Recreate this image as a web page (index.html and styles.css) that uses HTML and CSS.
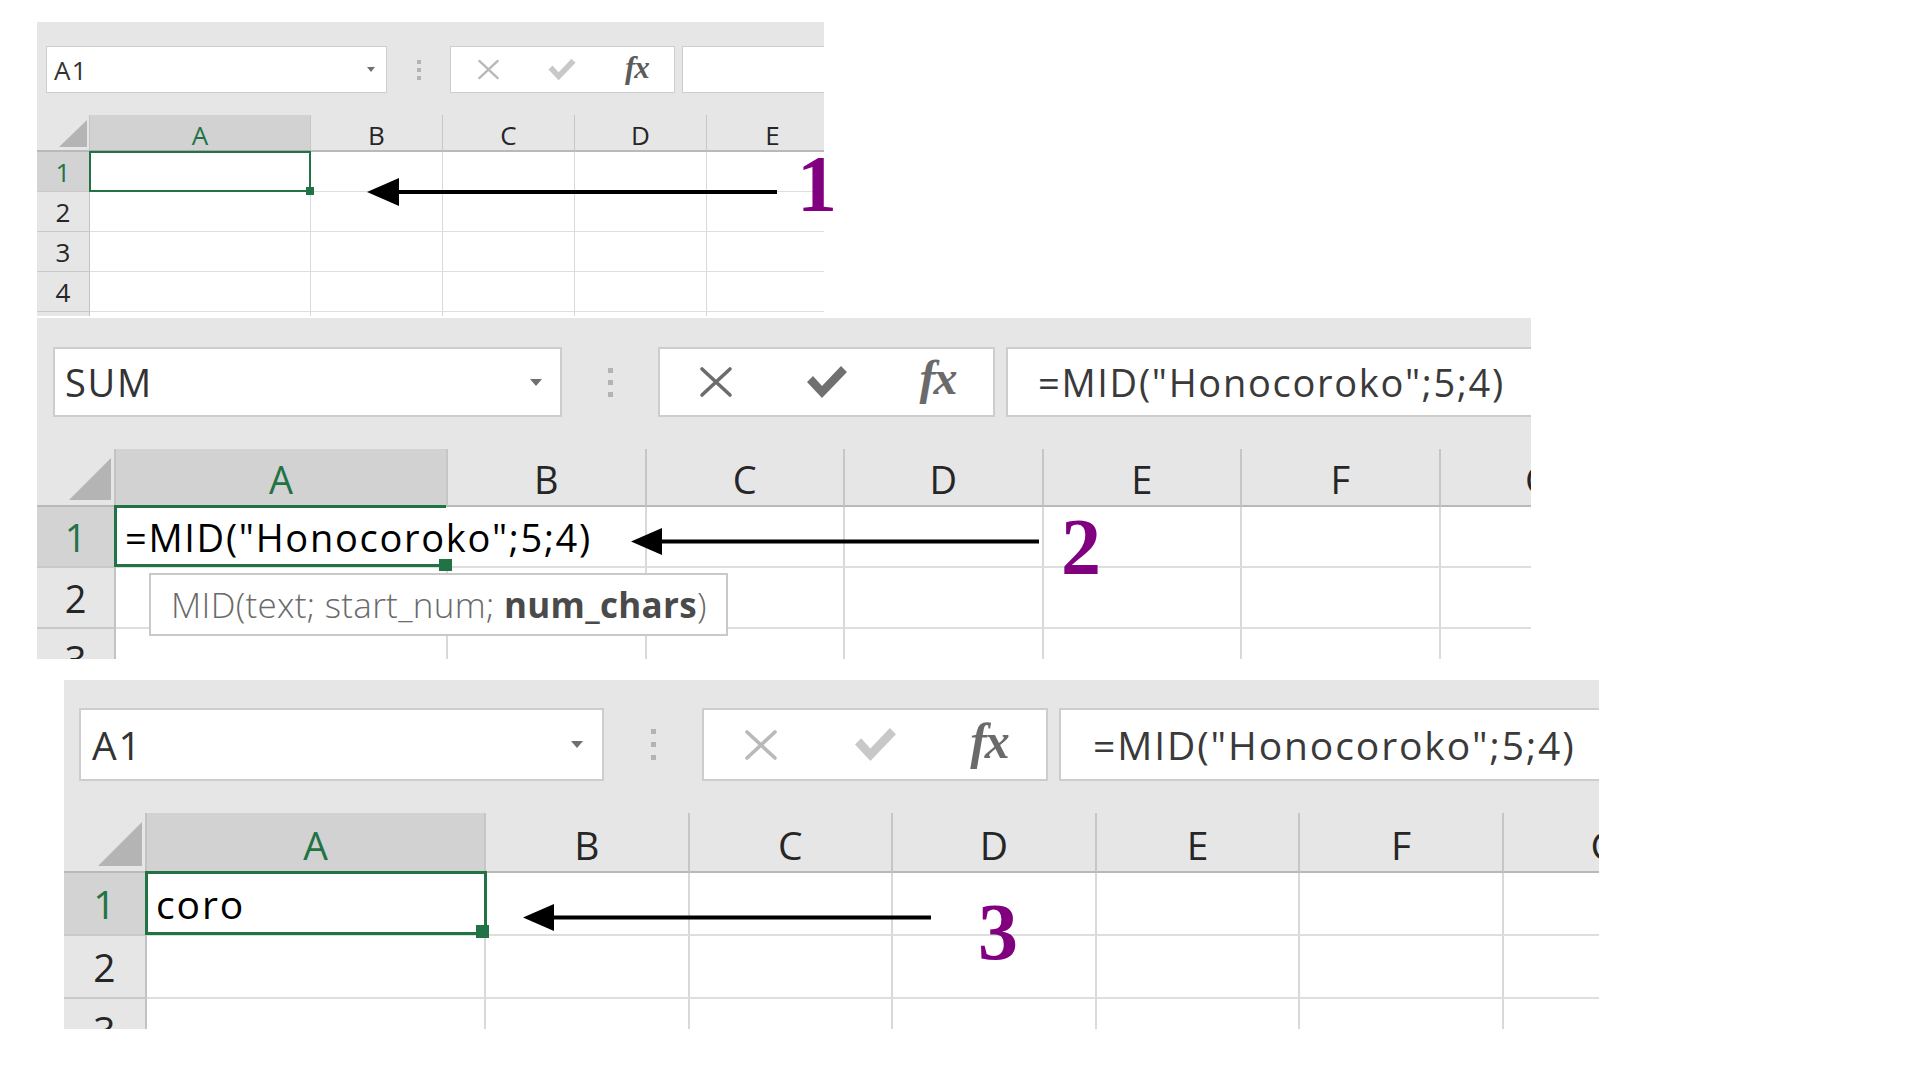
FILE: index.html
```html
<!DOCTYPE html>
<html lang="en">
<head>
<meta charset="utf-8">
<title>MID function steps</title>
<link rel="stylesheet" href="styles.css">
</head>
<body>
<main class="page">

  <section class="panel p1">
    <div class="frame">
      <div class="toolbar">
        <div class="namebox"><span class="name">A1</span><span class="caret"></span></div>
        <div class="vdots"><i></i><i></i><i></i></div>
        <div class="btnbox off">
          <span class="btn"><svg class="ico ico-x" viewBox="0 0 34 32"><path d="M3 3 L31 29 M31 3 L3 29"/></svg></span>
          <span class="btn"><svg class="ico ico-ok" viewBox="0 0 40 34"><polygon points="0,17 6,11 15,21 34,1 40,7 15,33"/></svg></span>
          <span class="btn"><span class="fx">fx</span></span>
        </div>
        <div class="formula"></div>
      </div>
      <div class="sheet">
        <div class="corner"><svg viewBox="0 0 10 10" preserveAspectRatio="none"><polygon points="10,0 10,10 0,10"/></svg></div>
        <div class="ch on">A</div><div class="ch">B</div><div class="ch">C</div><div class="ch">D</div><div class="ch">E</div><div class="ch">F</div>
        <div class="rh on">1</div><div class="c a1 sel"></div><div class="c"></div><div class="c"></div><div class="c"></div><div class="c"></div><div class="c"></div>
        <div class="rh">2</div><div class="c"></div><div class="c"></div><div class="c"></div><div class="c"></div><div class="c"></div><div class="c"></div>
        <div class="rh">3</div><div class="c"></div><div class="c"></div><div class="c"></div><div class="c"></div><div class="c"></div><div class="c"></div>
        <div class="rh">4</div><div class="c"></div><div class="c"></div><div class="c"></div><div class="c"></div><div class="c"></div><div class="c"></div>
        <div class="rh">5</div><div class="c"></div><div class="c"></div><div class="c"></div><div class="c"></div><div class="c"></div><div class="c"></div>
      </div>
    </div>
    <svg class="arrow ar1" viewBox="0 0 410 28"><polygon points="0,14 32,0 32,28"/><rect x="30" y="12" width="380" height="4"/></svg>
    <span class="step st1">1</span>
  </section>

  <section class="panel p2">
    <div class="frame">
      <div class="toolbar">
        <div class="namebox"><span class="name">SUM</span><span class="caret"></span></div>
        <div class="vdots"><i></i><i></i><i></i></div>
        <div class="btnbox on">
          <span class="btn"><svg class="ico ico-x" viewBox="0 0 34 32"><path d="M3 3 L31 29 M31 3 L3 29"/></svg></span>
          <span class="btn"><svg class="ico ico-ok" viewBox="0 0 40 34"><polygon points="0,17 6,11 15,21 34,1 40,7 15,33"/></svg></span>
          <span class="btn"><span class="fx">fx</span></span>
        </div>
        <div class="formula"><span class="ftext">=MID("Honocoroko";5;4)</span></div>
      </div>
      <div class="sheet">
        <div class="corner"><svg viewBox="0 0 10 10" preserveAspectRatio="none"><polygon points="10,0 10,10 0,10"/></svg></div>
        <div class="ch on">A</div><div class="ch">B</div><div class="ch">C</div><div class="ch">D</div><div class="ch">E</div><div class="ch">F</div><div class="ch">G</div>
        <div class="rh on">1</div><div class="c a1 edit"><span class="txt">=MID("Honocoroko";5;4)</span></div><div class="c"></div><div class="c"></div><div class="c"></div><div class="c"></div><div class="c"></div><div class="c"></div>
        <div class="rh">2</div><div class="c"></div><div class="c"></div><div class="c"></div><div class="c"></div><div class="c"></div><div class="c"></div><div class="c"></div>
        <div class="rh">3</div><div class="c"></div><div class="c"></div><div class="c"></div><div class="c"></div><div class="c"></div><div class="c"></div><div class="c"></div>
      </div>
    </div>
    <div class="tip"><span class="tiptext">MID(text; start_num; <b>num_chars</b>)</span></div>
    <svg class="arrow ar2" viewBox="0 0 408 27"><polygon points="0,13.5 31,0 31,27"/><rect x="29" y="11.5" width="379" height="4"/></svg>
    <span class="step st2">2</span>
  </section>

  <section class="panel p3">
    <div class="frame">
      <div class="toolbar">
        <div class="namebox"><span class="name">A1</span><span class="caret"></span></div>
        <div class="vdots"><i></i><i></i><i></i></div>
        <div class="btnbox off">
          <span class="btn"><svg class="ico ico-x" viewBox="0 0 34 32"><path d="M3 3 L31 29 M31 3 L3 29"/></svg></span>
          <span class="btn"><svg class="ico ico-ok" viewBox="0 0 40 34"><polygon points="0,17 6,11 15,21 34,1 40,7 15,33"/></svg></span>
          <span class="btn"><span class="fx">fx</span></span>
        </div>
        <div class="formula"><span class="ftext">=MID("Honocoroko";5;4)</span></div>
      </div>
      <div class="sheet">
        <div class="corner"><svg viewBox="0 0 10 10" preserveAspectRatio="none"><polygon points="10,0 10,10 0,10"/></svg></div>
        <div class="ch on">A</div><div class="ch">B</div><div class="ch">C</div><div class="ch">D</div><div class="ch">E</div><div class="ch">F</div><div class="ch">G</div>
        <div class="rh on">1</div><div class="c a1 sel"><span class="txt">coro</span></div><div class="c"></div><div class="c"></div><div class="c"></div><div class="c"></div><div class="c"></div><div class="c"></div>
        <div class="rh">2</div><div class="c"></div><div class="c"></div><div class="c"></div><div class="c"></div><div class="c"></div><div class="c"></div><div class="c"></div>
        <div class="rh">3</div><div class="c"></div><div class="c"></div><div class="c"></div><div class="c"></div><div class="c"></div><div class="c"></div><div class="c"></div>
      </div>
    </div>
    <svg class="arrow ar3" viewBox="0 0 408 27"><polygon points="0,13.5 31,0 31,27"/><rect x="29" y="11.5" width="379" height="4"/></svg>
    <span class="step st3">3</span>
  </section>

</main>
</body>
</html>
```

FILE: styles.css
```css
* { box-sizing: border-box; }

html, body {
  margin: 0;
  padding: 0;
  background: #ffffff;
}

body {
  font-family: "Open Sans", "Noto Sans", sans-serif;
  color: #222;
}

.page {
  display: flex;
  flex-direction: column;
  align-items: flex-start;
  width: 1920px;
  height: 1080px;
}

/* ---------- panel scales ---------- */
.p1 {
  margin: 22px 0 0 37px;
  --fw: 787px; --fh: 294px;
  --fs: 26px; --ls: 1.2px;
  --tbh: 93px; --padt: 24px; --padl: 9px;
  --boxh: 47px; --nbw: 341px; --dotw: 63px; --btnw: 225px; --fgap: 7px;
  --bw: 1px;
  --line: 1px;
  --rhw: 53px; --cA: 221px; --cw: 132px; --ncol: 5; --hh: 37px; --rh: 40px;
  --sel: 2px;
}
.p2 {
  margin: 2px 0 0 37px;
  --fw: 1494px; --fh: 341px;
  --fs: 38px; --ls: 1.7px;
  --tbh: 131px; --padt: 29px; --padl: 16px;
  --boxh: 70px; --nbw: 509px; --dotw: 96px; --btnw: 337px; --fgap: 11px;
  --bw: 2px;
  --line: 2px;
  --rhw: 79px; --cA: 332px; --cw: 198.5px; --ncol: 6; --hh: 58px; --rh: 61px;
  --sel: 3px;
}
.p3 {
  margin: 21px 0 0 64px;
  --fw: 1535px; --fh: 349px;
  --fs: 39px; --ls: 1.9px;
  --tbh: 133px; --padt: 28px; --padl: 15px;
  --boxh: 73px; --nbw: 525px; --dotw: 98px; --btnw: 346px; --fgap: 11px;
  --bw: 2px;
  --line: 2px;
  --rhw: 83px; --cA: 339px; --cw: 203.6px; --ncol: 6; --hh: 60px; --rh: 63px;
  --sel: 3px;
}

.panel {
  position: relative;
  font-size: var(--fs);
  letter-spacing: var(--ls);
}

.frame {
  width: var(--fw);
  height: var(--fh);
  overflow: hidden;
  background: #e6e6e6;
}

/* ---------- toolbar ---------- */
.toolbar {
  display: flex;
  align-items: flex-start;
  height: var(--tbh);
  padding: var(--padt) 0 0 var(--padl);
}

.namebox {
  flex: 0 0 var(--nbw);
  height: var(--boxh);
  background: #fff;
  border: var(--bw) solid #cdcdcd;
  display: flex;
  align-items: center;
  justify-content: space-between;
  padding: 0 18px 0 10px;
  color: #333;
}
.p1 .namebox { padding: 0 11px 0 7px; }
.p3 .namebox { padding: 0 19px 0 11px; }

.caret {
  width: 0;
  height: 0;
  border-left: 6px solid transparent;
  border-right: 6px solid transparent;
  border-top: 7px solid #707070;
}
.p1 .caret {
  border-left-width: 4px;
  border-right-width: 4px;
  border-top-width: 5px;
}

.vdots {
  flex: 0 0 var(--dotw);
  height: var(--boxh);
  display: flex;
  flex-direction: column;
  align-items: center;
  justify-content: center;
  gap: 7px;
}
.vdots i {
  display: block;
  width: 5px;
  height: 5px;
  background: #b3b3b3;
}
.p1 .vdots { gap: 4px; }
.p1 .vdots i { width: 4px; height: 4px; }
.p3 .vdots { gap: 8px; }

.btnbox {
  flex: 0 0 var(--btnw);
  height: var(--boxh);
  background: #fff;
  border: var(--bw) solid #cdcdcd;
  display: flex;
  align-items: center;
  justify-content: space-around;
}
.btn {
  flex: 1 1 0;
  display: flex;
  align-items: center;
  justify-content: center;
}

.ico { display: block; }
.ico-x path {
  fill: none;
  stroke-width: 3.6;
  stroke-linecap: round;
}
.ico-ok polygon { stroke: none; }

.p2 .ico-x { width: 34px; height: 32px; }
.p2 .ico-ok { width: 40px; height: 34px; }
.p3 .ico-x { width: 36px; height: 32px; }
.p3 .ico-ok { width: 41px; height: 35px; }
.p1 .ico-x { width: 25px; height: 21px; }
.p1 .ico-ok { width: 28px; height: 23px; }

.on .ico-x path { stroke: #6c6c6c; }
.on .ico-ok polygon { fill: #707070; }
.off .ico-x path { stroke: #b9b9b9; }
.off .ico-ok polygon { fill: #c8c8c8; }

.fx {
  font-family: "Liberation Serif", "Times New Roman", serif;
  font-style: italic;
  font-weight: 700;
  letter-spacing: -2px;
  color: #6a6a6a;
  line-height: 1;
  padding-bottom: 8px;
  font-size: 48px;
}
.p1 .fx { font-size: 31px; color: #5c5c5c; padding-bottom: 5px; letter-spacing: -1px; }
.p3 .fx { font-size: 50px; }

.formula {
  flex: 0 0 900px;
  margin-left: var(--fgap);
  height: var(--boxh);
  background: #fff;
  border: var(--bw) solid #cdcdcd;
  display: flex;
  align-items: center;
  padding-left: 30px;
  color: #3a3a3a;
  white-space: nowrap;
}
.p3 .formula { padding-left: 32px; }

/* ---------- sheet grid ---------- */
.sheet {
  display: grid;
  grid-template-columns: var(--rhw) var(--cA) repeat(var(--ncol), var(--cw));
  grid-auto-rows: var(--rh);
  grid-template-rows: var(--hh);
}

.corner {
  display: flex;
  align-items: flex-end;
  justify-content: flex-end;
  border-bottom: 2px solid #b9b9b9;
  border-right: var(--line) solid #c3c3c3;
  padding: 0 3px 5px 0;
}
.corner svg { display: block; width: 42px; height: 42px; }
.corner polygon { fill: #b4b4b4; }
.p1 .corner { padding: 0 2px 3px 0; }
.p1 .corner svg { width: 28px; height: 27px; }
.p3 .corner svg { width: 44px; height: 44px; }

.ch {
  display: flex;
  align-items: center;
  justify-content: center;
  padding-top: 4px;
  border-right: var(--line) solid #c6c6c6;
  border-bottom: 2px solid #b9b9b9;
  color: #262626;
  letter-spacing: 0;
}
.ch.on {
  background: #d2d2d2;
  color: #217346;
  border-bottom-color: #a9a9a9;
}

.rh {
  display: flex;
  align-items: center;
  justify-content: center;
  background: #e6e6e6;
  border-bottom: var(--line) solid #c9c9c9;
  border-right: var(--line) solid #c3c3c3;
  color: #262626;
  letter-spacing: 0;
}
.rh.on {
  background: #d3d3d3;
  color: #217346;
}

.c {
  background: #fff;
  border-right: var(--line) solid #d9d9d9;
  border-bottom: var(--line) solid #dedede;
  display: flex;
  align-items: center;
  padding-left: 9px;
  white-space: nowrap;
  color: #000;
}
.p1 .c { padding-left: 6px; }

.a1 {
  position: relative;
  z-index: 2;
  overflow: visible;
}
.a1::after {
  content: "";
  position: absolute;
  top: -2px;
  left: -2px;
  right: -3px;
  bottom: -1px;
  border: var(--sel) solid #217346;
}
.a1::before {
  content: "";
  position: absolute;
  right: -5px;
  bottom: -4px;
  width: 13px;
  height: 13px;
  background: #217346;
  z-index: 3;
}
.p1 .a1::after { top: -1px; left: -1px; right: -1px; bottom: -1px; }
.p1 .a1::before { width: 8px; height: 8px; right: -4px; bottom: -4px; }

.a1.edit { border-right-color: transparent; }
.a1.edit::after { right: 0; border-right: none; }
.a1.edit::before { right: -6px; bottom: -5px; height: 12px; }

/* ---------- tooltip ---------- */
.tip {
  position: absolute;
  left: 112px;
  top: 255px;
  width: 579px;
  height: 63px;
  background: #fff;
  border: 2px solid #c9c9c9;
  display: flex;
  align-items: center;
  padding-left: 20px;
  font-size: 35px;
  letter-spacing: 0.3px;
  font-weight: 300;
  color: #6a6a6a;
  white-space: nowrap;
  z-index: 5;
}
.tip b {
  font-weight: 700;
  color: #4a4a4a;
}

/* ---------- annotations ---------- */
.arrow {
  position: absolute;
  fill: #000;
  z-index: 6;
}
.ar1 { left: 330px; top: 156px; width: 410px; height: 28px; }
.ar2 { left: 594px; top: 210px; width: 408px; height: 27px; }
.ar3 { left: 459px; top: 224px; width: 408px; height: 27px; }

.step {
  position: absolute;
  font-family: "Liberation Serif", "Times New Roman", serif;
  font-weight: 700;
  font-size: 80px;
  line-height: 1;
  letter-spacing: 0;
  color: #800080;
  z-index: 6;
}
.st1 { left: 760px; top: 122px; }
.st2 { left: 1024px; top: 189px; }
.st3 { left: 914px; top: 212px; }
```
